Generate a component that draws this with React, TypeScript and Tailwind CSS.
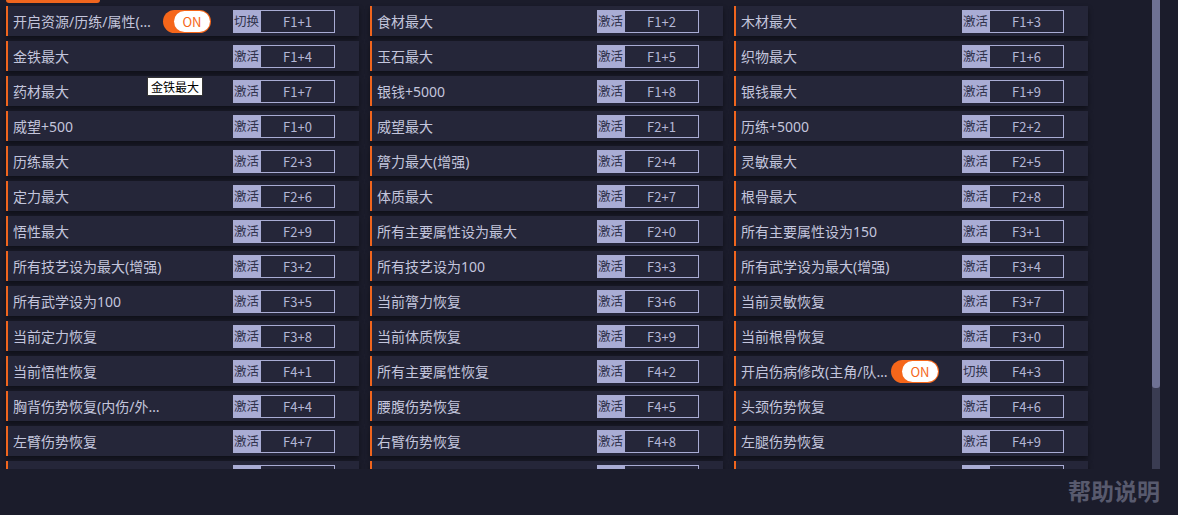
import React from "react";

type Item = { name: string; key: string; toggle?: boolean };

// 14 行 × 3 列，最后一行被滚动区域裁掉
const items: Item[] = [
  { name: "开启资源/历练/属性(主角/队友)", key: "F1+1", toggle: true },
  { name: "食材最大", key: "F1+2" },
  { name: "木材最大", key: "F1+3" },
  { name: "金铁最大", key: "F1+4" },
  { name: "玉石最大", key: "F1+5" },
  { name: "织物最大", key: "F1+6" },
  { name: "药材最大", key: "F1+7" },
  { name: "银钱+5000", key: "F1+8" },
  { name: "银钱最大", key: "F1+9" },
  { name: "威望+500", key: "F1+0" },
  { name: "威望最大", key: "F2+1" },
  { name: "历练+5000", key: "F2+2" },
  { name: "历练最大", key: "F2+3" },
  { name: "膂力最大(增强)", key: "F2+4" },
  { name: "灵敏最大", key: "F2+5" },
  { name: "定力最大", key: "F2+6" },
  { name: "体质最大", key: "F2+7" },
  { name: "根骨最大", key: "F2+8" },
  { name: "悟性最大", key: "F2+9" },
  { name: "所有主要属性设为最大", key: "F2+0" },
  { name: "所有主要属性设为150", key: "F3+1" },
  { name: "所有技艺设为最大(增强)", key: "F3+2" },
  { name: "所有技艺设为100", key: "F3+3" },
  { name: "所有武学设为最大(增强)", key: "F3+4" },
  { name: "所有武学设为100", key: "F3+5" },
  { name: "当前膂力恢复", key: "F3+6" },
  { name: "当前灵敏恢复", key: "F3+7" },
  { name: "当前定力恢复", key: "F3+8" },
  { name: "当前体质恢复", key: "F3+9" },
  { name: "当前根骨恢复", key: "F3+0" },
  { name: "当前悟性恢复", key: "F4+1" },
  { name: "所有主要属性恢复", key: "F4+2" },
  { name: "开启伤病修改(主角/队友)", key: "F4+3", toggle: true },
  { name: "胸背伤势恢复(内伤/外伤)", key: "F4+4" },
  { name: "腰腹伤势恢复", key: "F4+5" },
  { name: "头颈伤势恢复", key: "F4+6" },
  { name: "左臂伤势恢复", key: "F4+7" },
  { name: "右臂伤势恢复", key: "F4+8" },
  { name: "左腿伤势恢复", key: "F4+9" },
  { name: "右腿伤势恢复", key: "F4+0" },
  { name: "全部伤势恢复", key: "F5+1" },
  { name: "清除中毒", key: "F5+2" },
];

function Toggle() {
  return (
    <div className="flex h-[23px] w-[48px] shrink-0 items-center justify-end rounded-full bg-[#f5661a] pr-[1px]">
      <div className="flex h-[21px] w-[36px] items-center justify-center rounded-full bg-white text-[13px] leading-none text-[#f5661a]">
        ON
      </div>
    </div>
  );
}

function Card({ item }: { item: Item }) {
  return (
    <div className="flex h-[30px] items-center border-l-2 border-[#f0651e] bg-[#252639] pl-[5px] shadow-[0_3px_5px_rgba(0,0,0,0.45)]">
      {/* 拉丁字体放前面，省略号落在基线上 */}
      <div className="w-[150px] shrink-0 truncate pt-[2px] font-['Noto_Sans','Noto_Sans_CJK_SC',sans-serif] text-[14px] leading-[28px] text-[#c3c5dc]">
        {item.name}
      </div>
      {item.toggle && <Toggle />}
      <div className="ml-auto mr-[24px] flex h-[23px] items-stretch">
        <div className="flex w-[27px] items-center justify-center bg-[#a9acd4] text-[12.5px] leading-none text-[#30324c]">
          {item.toggle ? "切换" : "激活"}
        </div>
        <div className="flex w-[75px] items-center justify-center border border-[#a9acd4] text-[13px] leading-none text-[#b4b7d6]">
          {item.key}
        </div>
      </div>
    </div>
  );
}

export default function App() {
  return (
    <div className="relative h-[515px] w-[1178px] overflow-hidden bg-[#1b1c2b] font-['Noto_Sans_CJK_SC','Noto_Sans',sans-serif]">
      <div className="flex">
        <div className="h-[469px] w-[1152px] overflow-hidden pl-[6px]">
          <div className="h-[3px] w-[94px] rounded-b-[4px] bg-[#f0651e]" />
          <div className="mt-[3px] grid grid-cols-[353px_353px_354px] gap-x-[11px] gap-y-[5px]">
            {items.map((it, i) => (
              <Card key={i} item={it} />
            ))}
          </div>
        </div>
        <div className="flex h-[469px] w-[8px] flex-col bg-[#3a3c52]">
          <div className="h-[388px] rounded-b-[3px] bg-[#6e7193]" />
        </div>
      </div>

      <div className="flex justify-end pr-[18px] pt-[6px]">
        <span className="text-[23px] font-bold leading-[30px] text-[#585a6e]">帮助说明</span>
      </div>

      {/* hover 提示 */}
      <div className="absolute left-[147px] top-[77px] border border-[#333] bg-white px-[3px] text-[12px] leading-[17px] text-black">
        金铁最大
      </div>
    </div>
  );
}
